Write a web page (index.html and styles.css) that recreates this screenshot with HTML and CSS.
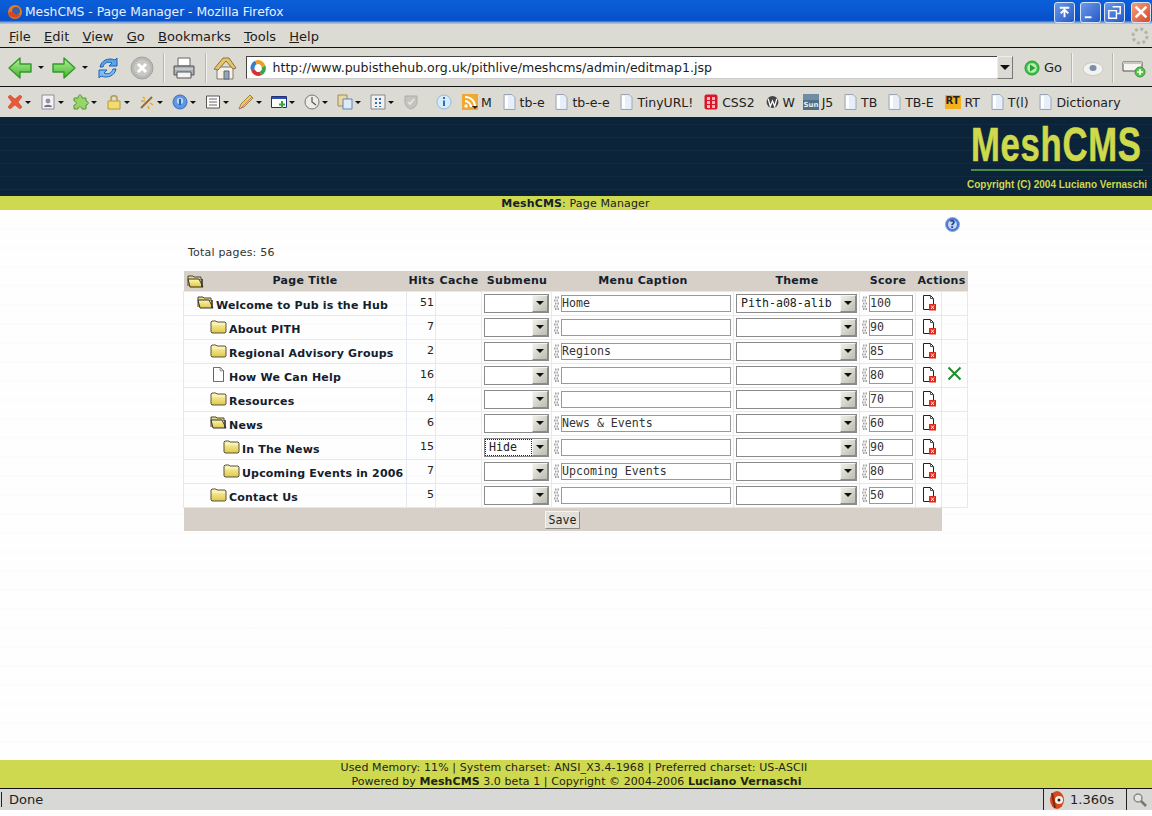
FILE: index.html
```html
<!DOCTYPE html>
<html lang="en">
<head>
    <meta charset="UTF-8">
    <title>MeshCMS - Page Manager - Mozilla Firefox</title>
    <link rel="stylesheet" href="styles.css">
</head>
<body>

<svg class="defs" width="0" height="0">
    <defs>
        <linearGradient id="green" x1="0" y1="0" x2="0" y2="1"><stop offset="0" stop-color="#b4f09c"/><stop offset="1" stop-color="#45b52f"/></linearGradient>
        <linearGradient id="yellow" x1="0" y1="0" x2="0" y2="1"><stop offset="0" stop-color="#fdf7b4"/><stop offset="1" stop-color="#e0c845"/></linearGradient>
        <symbol id="i-back" viewBox="0 0 24 24"><path d="M1 12 12 2v6h11v8H12v6z" fill="url(#green)" stroke="#2f9a2a" stroke-width="1.4" stroke-linejoin="round"/></symbol>
        <symbol id="i-forward" viewBox="0 0 24 24"><path d="M23 12 12 2v6H1v8h11v6z" fill="url(#green)" stroke="#2f9a2a" stroke-width="1.4" stroke-linejoin="round"/></symbol>
        <symbol id="i-reload" viewBox="0 0 24 24"><path d="M4 11C5 5 12 1 19 4l2-2v8h-8l3-3C12 5 8 7 7 11z" fill="#5aa4e8" stroke="#1b5fb5"/><path d="M20 13c-1 6-8 10-15 7l-2 2v-8h8l-3 3c4 2 8 0 9-4z" fill="#7dbcf0" stroke="#1b5fb5"/></symbol>
        <symbol id="i-stop" viewBox="0 0 24 24"><circle cx="12" cy="12" r="11" fill="#b9b9b5" stroke="#a3a3a0"/><circle cx="12" cy="12" r="8" fill="#c9c9c6"/><path d="M8 8l8 8M16 8l-8 8" stroke="#fff" stroke-width="3"/></symbol>
        <symbol id="i-print" viewBox="0 0 24 24"><path d="M6 2h12v8H6z" fill="#fff" stroke="#666"/><path d="M2 10h20v9H2z" fill="#a9aeb5" stroke="#555"/><path d="M5 16h14v6H5z" fill="#f4f4f4" stroke="#555"/><path d="M3 13h18" stroke="#dfe3e8"/></symbol>
        <symbol id="i-home" viewBox="0 0 24 24"><path d="M4 11v12h16V11z" fill="#f5f1e6" stroke="#7a7a78"/><path d="M1 13 10 2h6l7 10-3 1-7-8-8 9z" fill="#e6c56a" stroke="#8a7340"/><path d="M11 15h5v8h-5z" fill="#8aa7c4" stroke="#666"/></symbol>
        <symbol id="i-fav" viewBox="0 0 16 16"><g fill="none" stroke-width="4"><path d="M3 10a5.500 5.500 0 0 1 0-4.500 5.500 5.500 0 0 1 3-3" stroke="#2f7fd0"/><path d="M6 2.500a5.500 5.500 0 0 1 7.500 4" stroke="#f0a020"/><path d="M13.500 6.500a5.500 5.500 0 0 1-3 7" stroke="#36a84a"/><path d="M10.500 13.500a5.500 5.500 0 0 1-7.500-3.500" stroke="#d83030"/></g></symbol>
        <symbol id="i-go" viewBox="0 0 16 16"><circle cx="8" cy="8" r="7" fill="#3cc04a" stroke="#239a30"/><circle cx="8" cy="8" r="4.8" fill="#b6efb0"/><path d="M6 4.5 11.5 8 6 11.5z" fill="#25a233"/></symbol>
        <symbol id="i-disc" viewBox="0 0 22 16"><ellipse cx="11" cy="9" rx="10" ry="6.5" fill="#f2f2f0" stroke="#c8c8c6"/><ellipse cx="11" cy="8" rx="3.5" ry="3" fill="#7b8ea3"/></symbol>
        <symbol id="i-newtab" viewBox="0 0 24 20"><path d="M1 4h19v9H1z" fill="#f5f4ee" stroke="#555"/><path d="M1 4h19v2H1z" fill="#c9c8be"/><circle cx="18" cy="14" r="5" fill="#55c24a" stroke="#3a9a35"/><path d="M18 11v6M15 14h6" stroke="#fff" stroke-width="1.6"/></symbol>
        <symbol id="i-x-red" viewBox="0 0 16 16"><path d="M3 1 8 5l5-4 2 2-4 5 4 5-2 2-5-4-5 4-2-2 4-5-4-5z" fill="#e8593c" stroke="#c43b22" stroke-width=".5"/></symbol>
        <symbol id="i-person" viewBox="0 0 16 16"><path d="M2 1h12v14H2z" fill="#f2f2f6" stroke="#8c8ca0"/><circle cx="8" cy="7" r="2.4" fill="#9a8f9a"/><path d="M4 13c0-3 8-3 8 0z" fill="#7a6f8a"/></symbol>
        <symbol id="i-puzzle" viewBox="0 0 16 16"><path d="M1 4h4c0-4 4-4 4 0h4v3c3 0 3 4 0 4v4H9c0-3-4-3-4 0H1v-4c3 0 3-4 0-4z" fill="#9ad36a" stroke="#4f9a33"/></symbol>
        <symbol id="i-lock" viewBox="0 0 16 16"><path d="M5 7V4c0-3 6-3 6 0v3" fill="none" stroke="#b09a50" stroke-width="1.5"/><path d="M2 7h12v8H2z" fill="#f3db6e" stroke="#b39a3a"/></symbol>
        <symbol id="i-wand" viewBox="0 0 16 16"><path d="M2 14 13 3" stroke="#9a6a30" stroke-width="2"/><path d="M4 3l2 2M11 9l3 2M2 7h4M9 12l1 3" stroke="#e2a628" stroke-width="1.4"/></symbol>
        <symbol id="i-info-blue" viewBox="0 0 16 16"><circle cx="8" cy="8" r="7" fill="#5f96e2" stroke="#3a6fc0"/><circle cx="8" cy="7" r="3.2" fill="#b9d4f5"/><path d="M7 5h2v6H7z" fill="#2e5fb0"/></symbol>
        <symbol id="i-lines" viewBox="0 0 16 16"><path d="M1.500 2h13v12h-13z" fill="#fff" stroke="#555"/><path d="M4 5h8M4 8h8M4 11h8" stroke="#666"/></symbol>
        <symbol id="i-pencil" viewBox="0 0 16 16"><path d="M1 15l2-5 9-9 3 3-9 9z" fill="#e8d060" stroke="#a08a30"/><path d="M2 15 14 3" stroke="#c2609a" stroke-width=".8"/></symbol>
        <symbol id="i-window" viewBox="0 0 16 16"><path d="M.5 2.500h15v11H.5z" fill="#fff" stroke="#1f2f78"/><path d="M1 3h14v2H1z" fill="#2f4fb0"/><path d="M11 7v7M8 10.500h6" stroke="#3aa53a" stroke-width="2"/></symbol>
        <symbol id="i-clock" viewBox="0 0 16 16"><circle cx="8" cy="8" r="7" fill="#ecebe6" stroke="#777"/><path d="M8 3v5l4 3" fill="none" stroke="#555" stroke-width="1.2"/></symbol>
        <symbol id="i-paste" viewBox="0 0 16 16"><path d="M1 1h9v11H1z" fill="#e8d8a8" stroke="#a08a50"/><path d="M6 5h9v10H6z" fill="#dcebf8" stroke="#5d87b8"/></symbol>
        <symbol id="i-grid" viewBox="0 0 16 16"><path d="M1 1h14v14H1z" fill="#f0f0f0" stroke="#888"/><path d="M5 4h2v2H5zM9 4h2v2H9zM5 8h2v2H5zM9 8h2v2H9zM5 12h2v1H5zM9 12h2v1H9z" fill="#3a70a8"/></symbol>
        <symbol id="i-shield" viewBox="0 0 16 16"><path d="M2 2h12v6c0 4-3 6-6 7-3-1-6-3-6-7z" fill="#c4c4be" stroke="#aeaea8"/><path d="M5 8l2 2 4-5" fill="none" stroke="#e8e8e4" stroke-width="1.6"/></symbol>
        <symbol id="i-info" viewBox="0 0 16 16"><circle cx="8" cy="8" r="7" fill="#d9ebf8" stroke="#8cbbe0"/><path d="M7 3h2v2H7zM7 6.500h2V12H7z" fill="#2f6fb8"/></symbol>
        <symbol id="i-rss" viewBox="0 0 16 16"><path d="M0 0h16v16H0z" fill="#f0a830"/><path d="M3 3c6 0 10 4 10 10M3 7c3 0 6 3 6 6" fill="none" stroke="#fff" stroke-width="2"/><circle cx="4" cy="12" r="1.700" fill="#fff"/><path d="M10 12h6l-3 3z" fill="#222"/></symbol>
        <symbol id="i-bm" viewBox="0 0 13 16"><path d="M1 .500h8l3 3v12H1z" fill="#e6eefa" stroke="#9aa6b8"/><path d="M2 2h3v12H2z" fill="#fff"/></symbol>
        <symbol id="i-css" viewBox="0 0 14 16"><rect x=".5" y=".5" width="13" height="15" rx="2" fill="#d8182a"/><path d="M3 3h3v3H3zM8 3h3v3H8zM3 7h3v3H3zM8 7h3v3H8zM3 11h3v3H3zM8 11h3v3H8z" fill="#f6b8b8"/></symbol>
        <symbol id="i-w" viewBox="0 0 12 12"><circle cx="6" cy="6" r="5.500" fill="#444"/><path d="M2 3l2 7 2-5 2 5 2-7" fill="none" stroke="#fff" stroke-width="1.200"/></symbol>
        <symbol id="i-sun" viewBox="0 0 16 16"><path d="M0 0h16v16H0z" fill="#4f7088"/><path d="M0 0h16v6H0z" fill="#6f8ea5"/><text x="8" y="13" class="sun-text">Sun</text></symbol>
        <symbol id="i-folder" viewBox="0 0 17 15"><path d="M1 13V3l1-1h4l1 1h8l1 1v9l-1 1H2z" fill="url(#yellow)" stroke="#55524a"/><path d="M2 5h13" stroke="#fdf9cc"/></symbol>
        <symbol id="i-folder-open" viewBox="0 0 17 15"><path d="M1 12V2h5l1 1h7v3" fill="#ecdc7c" stroke="#44423a"/><path d="M1 5h11l4 8H3z" fill="url(#yellow)" stroke="#33312a"/><path d="M15 5v8" stroke="#33312a" stroke-width="1.600"/></symbol>
        <symbol id="i-page" viewBox="0 0 14 18"><path d="M1 .500h8l4 4v13H1z" fill="#fff" stroke="#444"/><path d="M9 .500v4h4" fill="none" stroke="#777"/></symbol>
        <symbol id="i-del" viewBox="0 0 15 16"><path d="M1.500 .500h7l3 3v11h-10z" fill="#fff" stroke="#222"/><path d="M8.500 .500v3h3" fill="none" stroke="#555"/><rect x="7" y="9" width="7" height="6.500" fill="#e02818"/><path d="M9 10.500l3 3.500M12 10.500 9 14" stroke="#fff"/></symbol>
        <symbol id="i-move" viewBox="0 0 15 15"><path d="M1.500 1.500 13.500 13.500M13.500 1.500 1.500 13.500" stroke="#1f8a2a" stroke-width="2"/></symbol>
        <symbol id="i-help" viewBox="0 0 15 15"><circle cx="7.500" cy="7.500" r="7" fill="#4a78d0" stroke="#8aa8e0"/><circle cx="7.500" cy="7.500" r="4.500" fill="#c8d8f4"/><text x="7.500" y="11" class="help-q">?</text></symbol>
        <symbol id="i-grip" viewBox="0 0 6 14"><path d="M1 1.500h4M0 4.500h5M1 7.500h4M0 10.500h5M1 13h4" stroke="#a2a2a2" stroke-width="2" stroke-dasharray="1.500 1"/></symbol>
        <symbol id="i-fox" viewBox="0 0 16 20"><ellipse cx="8" cy="10" rx="7" ry="9" fill="#d8481e"/><circle cx="10" cy="10" r="4" fill="#f4f0e8"/><circle cx="10" cy="10" r="1.500" fill="#222"/><path d="M3 3l3 15" stroke="#7a2a10" stroke-width="2"/></symbol>
        <symbol id="i-search" viewBox="0 0 16 16"><circle cx="6" cy="6" r="4" fill="#e6e6e0" stroke="#8a8a84" stroke-width="1.500"/><path d="M9 9l5 5" stroke="#77776f" stroke-width="2.500"/></symbol>
        <symbol id="i-firefox" viewBox="0 0 16 16"><circle cx="8" cy="8" r="7" fill="#e87a20"/><circle cx="9" cy="7" r="4" fill="#3d5fa8"/><path d="M1 9c2 5 10 7 13 1-3 2-7 1-8-3z" fill="#d8481e"/></symbol>
    </defs>
</svg>

<div class="titlebar">
    <svg class="title-icon"><use href="#i-firefox"/></svg>
    <span class="title-text">MeshCMS - Page Manager - Mozilla Firefox</span>
    <div class="win-btns">
        <span class="win-btn"><svg viewBox="0 0 20 20"><path d="M5 5h10M10 15V8M6 11l4-4 4 4" fill="none" stroke="#fff" stroke-width="2"/></svg></span>
        <span class="win-btn win-min"><svg viewBox="0 0 20 20"><path d="M4 14h7v2H4z" fill="#fff"/></svg></span>
        <span class="win-btn"><svg viewBox="0 0 20 20"><path d="M8 4h8v7h-3M4 8h8v8H4z" fill="none" stroke="#fff" stroke-width="1.500"/></svg></span>
        <span class="win-btn win-close"><svg viewBox="0 0 20 20"><path d="M4 4l12 12M16 4 4 16" stroke="#fff" stroke-width="3"/></svg></span>
    </div>
</div>

<div class="menubar">
    <span class="menu-item"><u>F</u>ile</span>
    <span class="menu-item"><u>E</u>dit</span>
    <span class="menu-item"><u>V</u>iew</span>
    <span class="menu-item"><u>G</u>o</span>
    <span class="menu-item"><u>B</u>ookmarks</span>
    <span class="menu-item"><u>T</u>ools</span>
    <span class="menu-item"><u>H</u>elp</span>
    <svg class="throbber" viewBox="0 0 20 20"><circle cx="10" cy="10" r="7" fill="none" stroke="#b4b3aa" stroke-width="3" stroke-dasharray="3 2.500"/></svg>
</div>

<div class="navbar">
    <svg class="nav-icon nav-back"><use href="#i-back"/></svg><span class="drop nav-drop"></span>
    <svg class="nav-icon nav-forward"><use href="#i-forward"/></svg><span class="drop nav-drop"></span>
    <svg class="nav-icon nav-reload"><use href="#i-reload"/></svg>
    <svg class="nav-icon nav-stop"><use href="#i-stop"/></svg>
    <span class="nav-sep"></span>
    <svg class="nav-icon"><use href="#i-print"/></svg>
    <span class="nav-sep sep-print"></span>
    <svg class="nav-icon"><use href="#i-home"/></svg>
    <div class="urlbar">
        <svg class="fav"><use href="#i-fav"/></svg>
        <span class="url-text">http://www.pubisthehub.org.uk/pithlive/meshcms/admin/editmap1.jsp</span>
        <span class="url-btn"><span class="drop"></span></span>
    </div>
    <svg class="go-icon"><use href="#i-go"/></svg>
    <span class="go-text">Go</span>
    <span class="nav-sep sep-a"></span>
    <svg class="disc-icon"><use href="#i-disc"/></svg>
    <span class="nav-sep sep-b"></span>
    <svg class="newtab-icon"><use href="#i-newtab"/></svg>
</div>

<div class="bookmarks">
    <div class="ext-group">
        <span class="ext-btn"><svg><use href="#i-x-red"/></svg><span class="drop"></span></span>
        <span class="ext-btn"><svg><use href="#i-person"/></svg><span class="drop"></span></span>
        <span class="ext-btn"><svg><use href="#i-puzzle"/></svg><span class="drop"></span></span>
        <span class="ext-btn"><svg><use href="#i-lock"/></svg><span class="drop"></span></span>
        <span class="ext-btn"><svg><use href="#i-wand"/></svg><span class="drop"></span></span>
        <span class="ext-btn"><svg><use href="#i-info-blue"/></svg><span class="drop"></span></span>
        <span class="ext-btn"><svg><use href="#i-lines"/></svg><span class="drop"></span></span>
        <span class="ext-btn"><svg><use href="#i-pencil"/></svg><span class="drop"></span></span>
        <span class="ext-btn"><svg><use href="#i-window"/></svg><span class="drop"></span></span>
        <span class="ext-btn"><svg><use href="#i-clock"/></svg><span class="drop"></span></span>
        <span class="ext-btn"><svg><use href="#i-paste"/></svg><span class="drop"></span></span>
        <span class="ext-btn"><svg><use href="#i-grid"/></svg><span class="drop"></span></span>
        <span class="ext-btn"><svg><use href="#i-shield"/></svg></span>
        <span class="ext-btn"><svg><use href="#i-info"/></svg></span>
    </div>
    <div class="bm-group">
        <span class="bm"><svg class="bm-wide"><use href="#i-rss"/></svg>M</span>
        <span class="bm"><svg><use href="#i-bm"/></svg>tb-e</span>
        <span class="bm"><svg><use href="#i-bm"/></svg>tb-e-e</span>
        <span class="bm"><svg><use href="#i-bm"/></svg>TinyURL!</span>
        <span class="bm"><svg class="bm-css"><use href="#i-css"/></svg>CSS2</span>
        <span class="bm"><svg><use href="#i-w"/></svg>W</span>
        <span class="bm bm-tight"><svg class="bm-wide"><use href="#i-sun"/></svg>J5</span>
        <span class="bm"><svg><use href="#i-bm"/></svg>TB</span>
        <span class="bm"><svg><use href="#i-bm"/></svg>TB-E</span>
        <span class="bm"><span class="rt-badge">RT</span>RT</span>
        <span class="bm"><svg><use href="#i-bm"/></svg>T(l)</span>
        <span class="bm"><svg><use href="#i-bm"/></svg>Dictionary</span>
    </div>
</div>

<div class="banner">
    <div class="logo">
        <div class="logo-name">MeshCMS</div>
        <div class="logo-rule"></div>
        <div class="logo-copy">Copyright (C) 2004 Luciano Vernaschi</div>
    </div>
</div>
<div class="crumb"><strong>MeshCMS</strong>: Page Manager</div>

<div class="content">
    <div class="help-row"><svg class="help-icon"><use href="#i-help"/></svg></div>
    <p class="total">Total pages: 56</p>

    <table class="pages">
        <colgroup>
            <col class="c-title"><col class="c-hits"><col class="c-cache"><col class="c-sub">
            <col class="c-caption"><col class="c-theme"><col class="c-score"><col class="c-act"><col class="c-act">
        </colgroup>
        <thead>
            <tr>
                <th class="th-title"><svg class="head-folder"><use href="#i-folder-open"/></svg>Page Title</th>
                <th>Hits</th><th>Cache</th><th>Submenu</th><th>Menu Caption</th><th>Theme</th><th>Score</th><th class="th-actions">Actions</th><th class="th-end"></th>
            </tr>
        </thead>
        <tbody>
            <tr>
                <td class="t-cell lvl0"><svg class="tree-icon"><use href="#i-folder-open"/></svg><a>Welcome to Pub is the Hub</a></td>
                <td class="hits">51</td><td></td>
                <td><div class="sel"><span class="sel-val"></span><span class="sel-btn"><span class="drop"></span></span></div></td>
                <td><div class="field"><svg class="grip"><use href="#i-grip"/></svg><span class="inp">Home</span></div></td>
                <td><div class="sel"><span class="sel-val">Pith-a08-alib</span><span class="sel-btn"><span class="drop"></span></span></div></td>
                <td><div class="field"><svg class="grip"><use href="#i-grip"/></svg><span class="inp">100</span></div></td>
                <td class="act"><svg class="del"><use href="#i-del"/></svg></td><td></td>
            </tr>
            <tr>
                <td class="t-cell lvl1"><svg class="tree-icon"><use href="#i-folder"/></svg><a>About PITH</a></td>
                <td class="hits">7</td><td></td>
                <td><div class="sel"><span class="sel-val"></span><span class="sel-btn"><span class="drop"></span></span></div></td>
                <td><div class="field"><svg class="grip"><use href="#i-grip"/></svg><span class="inp"></span></div></td>
                <td><div class="sel"><span class="sel-val"></span><span class="sel-btn"><span class="drop"></span></span></div></td>
                <td><div class="field"><svg class="grip"><use href="#i-grip"/></svg><span class="inp">90</span></div></td>
                <td class="act"><svg class="del"><use href="#i-del"/></svg></td><td></td>
            </tr>
            <tr>
                <td class="t-cell lvl1"><svg class="tree-icon"><use href="#i-folder"/></svg><a>Regional Advisory Groups</a></td>
                <td class="hits">2</td><td></td>
                <td><div class="sel"><span class="sel-val"></span><span class="sel-btn"><span class="drop"></span></span></div></td>
                <td><div class="field"><svg class="grip"><use href="#i-grip"/></svg><span class="inp">Regions</span></div></td>
                <td><div class="sel"><span class="sel-val"></span><span class="sel-btn"><span class="drop"></span></span></div></td>
                <td><div class="field"><svg class="grip"><use href="#i-grip"/></svg><span class="inp">85</span></div></td>
                <td class="act"><svg class="del"><use href="#i-del"/></svg></td><td></td>
            </tr>
            <tr>
                <td class="t-cell lvl1"><svg class="tree-icon"><use href="#i-page"/></svg><a>How We Can Help</a></td>
                <td class="hits">16</td><td></td>
                <td><div class="sel"><span class="sel-val"></span><span class="sel-btn"><span class="drop"></span></span></div></td>
                <td><div class="field"><svg class="grip"><use href="#i-grip"/></svg><span class="inp"></span></div></td>
                <td><div class="sel"><span class="sel-val"></span><span class="sel-btn"><span class="drop"></span></span></div></td>
                <td><div class="field"><svg class="grip"><use href="#i-grip"/></svg><span class="inp">80</span></div></td>
                <td class="act"><svg class="del"><use href="#i-del"/></svg></td>
                <td class="act"><svg class="move"><use href="#i-move"/></svg></td>
            </tr>
            <tr>
                <td class="t-cell lvl1"><svg class="tree-icon"><use href="#i-folder"/></svg><a>Resources</a></td>
                <td class="hits">4</td><td></td>
                <td><div class="sel"><span class="sel-val"></span><span class="sel-btn"><span class="drop"></span></span></div></td>
                <td><div class="field"><svg class="grip"><use href="#i-grip"/></svg><span class="inp"></span></div></td>
                <td><div class="sel"><span class="sel-val"></span><span class="sel-btn"><span class="drop"></span></span></div></td>
                <td><div class="field"><svg class="grip"><use href="#i-grip"/></svg><span class="inp">70</span></div></td>
                <td class="act"><svg class="del"><use href="#i-del"/></svg></td><td></td>
            </tr>
            <tr>
                <td class="t-cell lvl1"><svg class="tree-icon"><use href="#i-folder-open"/></svg><a>News</a></td>
                <td class="hits">6</td><td></td>
                <td><div class="sel"><span class="sel-val"></span><span class="sel-btn"><span class="drop"></span></span></div></td>
                <td><div class="field"><svg class="grip"><use href="#i-grip"/></svg><span class="inp">News &amp; Events</span></div></td>
                <td><div class="sel"><span class="sel-val"></span><span class="sel-btn"><span class="drop"></span></span></div></td>
                <td><div class="field"><svg class="grip"><use href="#i-grip"/></svg><span class="inp">60</span></div></td>
                <td class="act"><svg class="del"><use href="#i-del"/></svg></td><td></td>
            </tr>
            <tr>
                <td class="t-cell lvl2"><svg class="tree-icon"><use href="#i-folder"/></svg><a>In The News</a></td>
                <td class="hits">15</td><td></td>
                <td><div class="sel"><span class="sel-val sel-focus">Hide</span><span class="sel-btn"><span class="drop"></span></span></div></td>
                <td><div class="field"><svg class="grip"><use href="#i-grip"/></svg><span class="inp"></span></div></td>
                <td><div class="sel"><span class="sel-val"></span><span class="sel-btn"><span class="drop"></span></span></div></td>
                <td><div class="field"><svg class="grip"><use href="#i-grip"/></svg><span class="inp">90</span></div></td>
                <td class="act"><svg class="del"><use href="#i-del"/></svg></td><td></td>
            </tr>
            <tr>
                <td class="t-cell lvl2"><svg class="tree-icon"><use href="#i-folder"/></svg><a>Upcoming Events in 2006</a></td>
                <td class="hits">7</td><td></td>
                <td><div class="sel"><span class="sel-val"></span><span class="sel-btn"><span class="drop"></span></span></div></td>
                <td><div class="field"><svg class="grip"><use href="#i-grip"/></svg><span class="inp">Upcoming Events</span></div></td>
                <td><div class="sel"><span class="sel-val"></span><span class="sel-btn"><span class="drop"></span></span></div></td>
                <td><div class="field"><svg class="grip"><use href="#i-grip"/></svg><span class="inp">80</span></div></td>
                <td class="act"><svg class="del"><use href="#i-del"/></svg></td><td></td>
            </tr>
            <tr>
                <td class="t-cell lvl1"><svg class="tree-icon"><use href="#i-folder"/></svg><a>Contact Us</a></td>
                <td class="hits">5</td><td></td>
                <td><div class="sel"><span class="sel-val"></span><span class="sel-btn"><span class="drop"></span></span></div></td>
                <td><div class="field"><svg class="grip"><use href="#i-grip"/></svg><span class="inp"></span></div></td>
                <td><div class="sel"><span class="sel-val"></span><span class="sel-btn"><span class="drop"></span></span></div></td>
                <td><div class="field"><svg class="grip"><use href="#i-grip"/></svg><span class="inp">50</span></div></td>
                <td class="act"><svg class="del"><use href="#i-del"/></svg></td><td></td>
            </tr>
        </tbody>
        <tfoot>
            <tr>
                <td colspan="8" class="save-cell"><button class="save">Save</button></td>
                <td class="save-end"></td>
            </tr>
        </tfoot>
    </table>
</div>

<div class="footer">
    <div>Used Memory: 11% | System charset: ANSI_X3.4-1968 | Preferred charset: US-ASCII</div>
    <div class="footer-line2">Powered by <strong>MeshCMS</strong> 3.0 beta 1 | Copyright &copy; 2004-2006 <strong>Luciano Vernaschi</strong></div>
</div>

<div class="statusbar">
    <span class="status-done">Done</span>
    <span class="status-time"><svg><use href="#i-fox"/></svg>1.360s</span>
    <span class="status-search"><svg><use href="#i-search"/></svg></span>
</div>
<div class="bottom-strip"></div>

</body>
</html>
```

FILE: styles.css
```css
* {
    box-sizing: border-box;
}
body {
    margin: 0;
    height: 816px;
    overflow: hidden;
    display: flex;
    flex-direction: column;
    font-family: "DejaVu Sans", sans-serif;
    font-size: 11px;
    color: #222;
    background-color: #fefefe;
}
.defs {
    position: absolute;
}
svg {
    display: block;
    flex: none;
}

/* Window chrome */
.titlebar {
    height: 24px;
    flex: none;
    display: flex;
    align-items: center;
    padding: 0 1px 0 7px;
    color: #e8f0ff;
    font-size: 12.3px;
    background: linear-gradient(#0a5fd8, #0a58d4 40%, #0650c8 85%, #a9bfd8 96%);
}
.title-icon {
    width: 16px;
    height: 16px;
    margin-right: 2px;
}
.win-btns {
    margin-left: auto;
    display: flex;
    gap: 3px;
}
.win-btn {
    width: 21px;
    height: 21px;
    border: 1px solid #d8e4f8;
    border-radius: 3px;
    background: linear-gradient(135deg, #6b9ae8, #2658c8);
}
.win-min {
    margin-left: 2px;
}
.win-close {
    width: 20px;
    margin-left: 3px;
    background: linear-gradient(135deg, #f0a080, #d84a28);
}
.menubar {
    height: 24px;
    flex: none;
    display: flex;
    align-items: center;
    padding: 1px 0 0 9px;
    gap: 13.3px;
    font-size: 13px;
    background: #dcdbd3;
    border-bottom: 1px solid #111;
}
.throbber {
    width: 20px;
    height: 20px;
    margin-left: auto;
    margin-right: 2px;
}
.menu-item {
    color: #1c1c1c;
}
.navbar {
    height: 39px;
    flex: none;
    display: flex;
    align-items: center;
    padding: 1px 0 0 8px;
    background: #dcdbd3;
    border-bottom: 1px solid #111;
}
.nav-icon {
    width: 24px;
    height: 24px;
}
.nav-drop {
    margin: 0 8px 0 6px;
}
.nav-stop {
    margin-left: 10px;
}
.nav-sep {
    width: 2px;
    height: 30px;
    margin: 0 7px 0 9px;
    border-left: 1px solid #b8b7ae;
    border-right: 1px solid #f2f2ee;
}
.sep-print {
    margin-right: 6px;
}
.drop {
    display: inline-block;
    width: 0;
    height: 0;
    border-left: 3px solid transparent;
    border-right: 3px solid transparent;
    border-top: 3px solid #111;
}
.urlbar {
    width: 767px;
    height: 23px;
    margin-left: 9px;
    display: flex;
    align-items: center;
    background: #fff;
    border: 1px solid #444;
    border-bottom-color: #ccc;
    border-right: 0;
    padding-left: 3px;
}
.fav {
    width: 16px;
    height: 16px;
}
.url-text {
    margin-left: 6.5px;
    font-size: 12.57px;
    color: #1c1c1c;
}
.url-btn {
    margin-left: auto;
    width: 16px;
    height: 23px;
    display: flex;
    align-items: center;
    justify-content: center;
    background: #dcdbd3;
    border: 1px solid #777;
    border-top-color: #eee;
    border-left-color: #eee;
}
.url-btn .drop {
    border-left-width: 5px;
    border-right-width: 5px;
    border-top-width: 5px;
}
.go-icon {
    width: 16px;
    height: 16px;
    margin-left: 11px;
}
.go-text {
    margin-left: 4px;
    font-size: 13px;
}
.sep-a {
    margin: 0 9px 0 9px;
}
.disc-icon {
    width: 22px;
    height: 16px;
}
.sep-b {
    margin: 0 8px 0 8px;
}
.newtab-icon {
    width: 24px;
    height: 20px;
}
.bookmarks {
    height: 30px;
    flex: none;
    display: flex;
    align-items: center;
    padding-left: 7px;
    font-size: 12.5px;
    background: #dcdbd3;
}
.ext-group {
    display: flex;
}
.ext-btn {
    width: 33px;
    display: flex;
    align-items: center;
    gap: 2px;
}
.ext-btn svg {
    width: 16px;
    height: 16px;
}
.bm-group {
    display: flex;
    align-items: center;
    gap: 10.8px;
    margin-left: -7px;
}
.bm {
    display: flex;
    align-items: center;
    gap: 4px;
    color: #222;
}
.bm svg {
    width: 13px;
    height: 16px;
}
.bm .bm-wide {
    width: 16px;
    margin-right: -1px;
}
.bm .bm-css {
    width: 14px;
}
.bm-tight {
    margin-left: -3px;
}
.rt-badge {
    width: 16px;
    height: 14px;
    font-size: 10px;
    font-weight: bold;
    text-align: center;
    background: #f5b020;
    color: #222;
}
.sun-text {
    font-size: 7px;
    font-weight: bold;
    text-anchor: middle;
    fill: #e8eef2;
}

/* Page header */
.banner {
    height: 79px;
    flex: none;
    display: flex;
    justify-content: flex-end;
    background-color: #0c2439;
    background-image:
        repeating-linear-gradient(0deg, transparent 0 6px, rgba(70, 100, 125, 0.1) 6px 7px, transparent 7px 13px);
}
.logo {
    width: 186px;
    color: #ced94c;
}
.logo-name {
    width: 172px;
    margin: 6px 0 0 5px;
    font-family: "Liberation Sans", sans-serif;
    font-weight: bold;
    font-size: 48px;
    line-height: 44px;
    letter-spacing: 1px;
    white-space: nowrap;
    -webkit-text-stroke: 0.6px #ced94c;
    transform: scaleX(0.722);
    transform-origin: left center;
}
.logo-rule {
    width: 172px;
    height: 2px;
    margin: 2px 0 0 5px;
    background: #4d8a4a;
}
.logo-copy {
    width: 180px;
    margin: 6px 0 0 1px;
    font-family: "Liberation Sans", sans-serif;
    font-weight: bold;
    font-size: 11.5px;
    line-height: 14px;
    white-space: nowrap;
    transform: scaleX(0.87);
    transform-origin: left center;
}
.crumb {
    height: 14px;
    flex: none;
    padding: 1px 1px 0 0;
    line-height: 14px;
    letter-spacing: 0.15px;
    text-align: center;
    color: #14202c;
    background: #cfd94f;
}

/* Page manager table */
.content {
    flex: 1;
    background-color: #fefefe;
    background-image:
        repeating-linear-gradient(0deg, transparent 0 17px, rgba(0, 0, 0, 0.006) 17px 19px);
}
.help-row {
    display: flex;
    justify-content: flex-end;
    padding: 7px 192px 0 0;
}
.help-icon {
    width: 15px;
    height: 15px;
}
.help-q {
    font-size: 10px;
    font-weight: bold;
    text-anchor: middle;
    fill: #1f3f90;
}
.total {
    margin: 14px 0 0 188px;
    line-height: 14px;
    letter-spacing: 0.2px;
    color: #333;
}
.pages {
    margin: 11px 0 0 183px;
    width: 784px;
    table-layout: fixed;
    border-collapse: collapse;
}
.c-title { width: 223px; }
.c-hits { width: 29px; }
.c-cache { width: 46px; }
.c-sub { width: 70px; }
.c-caption { width: 182px; }
.c-theme { width: 126px; }
.c-score { width: 56px; }
.c-act { width: 26px; }
.pages th {
    height: 20px;
    padding: 0 0 0 1px;
    font-size: 11px;
    letter-spacing: 0.3px;
    color: #14202c;
    background: #d7d0c9;
    white-space: nowrap;
}
.pages .th-title {
    padding: 1px 0 0 3px;
}
.pages .th-actions {
    padding-left: 2px;
}
.head-folder {
    float: left;
    width: 17px;
    height: 15px;
}
.pages td {
    height: 24px;
    padding: 0;
    border: 1px solid #e3e9f0;
}
.pages .t-cell {
    vertical-align: bottom;
    padding-bottom: 2px;
    font-weight: bold;
    letter-spacing: 0.18px;
    color: #14202c;
    white-space: nowrap;
}
.t-cell a {
    display: inline-block;
    vertical-align: bottom;
    margin-left: 2px;
    line-height: 14px;
}
.pages .lvl0 { padding-left: 13px; }
.pages .lvl1 { padding-left: 26px; }
.pages .lvl2 { padding-left: 39px; }
.tree-icon {
    display: inline-block;
    width: 17px;
    height: 15px;
    vertical-align: bottom;
    margin-bottom: 3px;
}
.pages .hits {
    text-align: right;
    padding: 0 1px 1px 0;
}
.sel {
    height: 19px;
    margin: 0 2px;
    display: flex;
    background: #fff;
    border: 1px solid #8a8a8a;
    font-family: "DejaVu Sans Mono", monospace;
    font-size: 11.6px;
}
.sel-val {
    flex: 1;
    line-height: 17px;
    padding-left: 4px;
    color: #222;
}
.sel-focus {
    margin: 1px;
    padding-left: 3px;
    line-height: 15px;
    outline: 1px dotted #222;
}
.sel-btn {
    width: 16px;
    display: flex;
    align-items: center;
    justify-content: center;
    background: linear-gradient(135deg, #f0efe8, #bdbcb2);
    border: 1px solid #8c8b84;
    border-top-color: #f6f6f2;
    border-left-color: #f6f6f2;
}
.sel-btn .drop {
    border-left-width: 4px;
    border-right-width: 4px;
    border-top-width: 4px;
}
.field {
    display: flex;
    align-items: center;
    padding: 0 2px 0 2px;
}
.grip {
    width: 6px;
    height: 14px;
}
.inp {
    flex: 1;
    height: 17px;
    margin-left: 1px;
    line-height: 15px;
    background: #fff;
    border: 1px solid #999;
    font-family: "DejaVu Sans Mono", monospace;
    font-size: 11.6px;
    color: #333;
}
.pages .act {
    padding-left: 6px;
}
.del {
    width: 15px;
    height: 16px;
}
.move {
    width: 15px;
    height: 15px;
    margin-left: -1px;
    margin-bottom: 4px;
}
.pages .save-cell {
    padding-top: 1px;
    text-align: center;
    background: #d7d0c9;
    height: 23px;
    border: 0;
}
.pages .save-end {
    border: 0;
}
.save {
    height: 18px;
    padding: 0 3px;
    font-family: "DejaVu Sans Mono", monospace;
    font-size: 11.6px;
    color: #222;
    background: #e2e0d8;
    border: 1px solid #8c8b84;
    border-top-color: #f4f4f0;
    border-left-color: #f4f4f0;
}

/* Footer and browser status */
.footer {
    height: 29px;
    flex: none;
    padding: 1px 4px 0 0;
    line-height: 13.5px;
    letter-spacing: 0.1px;
    text-align: center;
    color: #1c2418;
    background: #cfd94f;
    border-bottom: 1px solid #111;
}
.footer-line2 {
    padding-left: 5px;
    letter-spacing: 0.07px;
}
.statusbar {
    height: 21px;
    flex: none;
    display: flex;
    align-items: center;
    font-size: 13px;
    background: #d8d8d6;
}
.status-done {
    flex: 1;
    padding-left: 7px;
    border-left: 1px solid #222;
    margin-left: 1px;
}
.status-time {
    width: 83px;
    height: 21px;
    display: flex;
    align-items: center;
    gap: 5px;
    padding-left: 5px;
    border-left: 1px solid #222;
}
.status-time svg {
    width: 16px;
    height: 20px;
}
.status-search {
    width: 26px;
    height: 21px;
    display: flex;
    align-items: center;
    justify-content: center;
    border-left: 1px solid #222;
}
.status-search svg {
    width: 16px;
    height: 16px;
}
.bottom-strip {
    height: 6px;
    flex: none;
    background: #fefefe;
}
```
